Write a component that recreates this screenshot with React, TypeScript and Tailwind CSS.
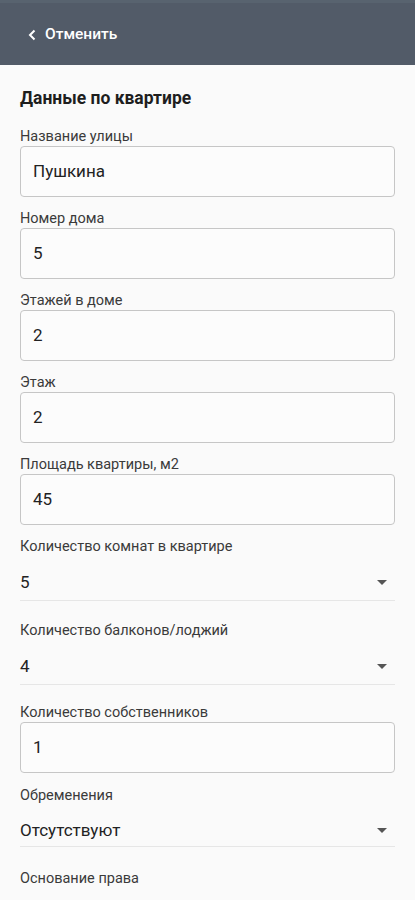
import React from "react";

const font = { fontFamily: "Roboto, 'Noto Sans', sans-serif" };

function Label({ children, cls = "" }: { children: React.ReactNode; cls?: string }) {
  return <div className={`text-[14.5px] leading-[20px] text-[#3a3a3a] ${cls}`}>{children}</div>;
}

function TextField({ label, value }: { label: string; value: string }) {
  return (
    <div className="flex flex-col">
      <Label>{label}</Label>
      <div className="mt-[-1px] flex h-[51px] items-center rounded-[4px] border border-[#c6c6c6] bg-[#fcfcfc] px-[12px] text-[17px] text-[#222]">
        {value}
      </div>
    </div>
  );
}

function SelectField({ label, value, rowCls }: { label: string; value: string; rowCls: string }) {
  return (
    <div className="flex flex-col">
      <Label>{label}</Label>
      <div className={`flex items-center justify-between border-b border-[#e6e6e6] pr-[8px] text-[17px] leading-[20px] text-[#222] ${rowCls}`}>
        <span>{value}</span>
        <svg width="10" height="5" viewBox="0 0 10 5">
          <path d="M0 0 L10 0 L5 5 Z" fill="#555" />
        </svg>
      </div>
    </div>
  );
}

export default function App() {
  return (
    <div className="min-h-[900px] w-[415px] bg-[#fafafa]" style={font}>
      <div className="flex h-[65px] items-center border-t-[3px] border-[#58636f] bg-[#525b68] pl-[28px] pt-[1px]">
        <svg width="9" height="12" viewBox="0 0 9 12" className="mr-[8px]">
          <path d="M6.5 1.5 L2 6 L6.5 10.5" fill="none" stroke="#fff" strokeWidth="2" />
        </svg>
        <span className="text-[15.5px] font-medium text-white">Отменить</span>
      </div>
      <div className="flex flex-col px-[20px] pt-[21px]">
        <div className="text-[17.5px] font-bold leading-[24px] text-[#1e1e1e]">Данные по квартире</div>
        <div className="mt-[17px] flex flex-col gap-[12px]">
          <TextField label="Название улицы" value="Пушкина" />
          <TextField label="Номер дома" value="5" />
          <TextField label="Этажей в доме" value="2" />
          <TextField label="Этаж" value="2" />
          <TextField label="Площадь квартиры, м2" value="45" />
        </div>
        <div className="mt-[12px] flex flex-col">
          <SelectField label="Количество комнат в квартире" value="5" rowCls="pt-[15px] pb-[8px]" />
          <div className="mt-[20px]">
            <SelectField label="Количество балконов/лоджий" value="4" rowCls="pt-[15px] pb-[8px]" />
          </div>
          <div className="mt-[18px]">
            <TextField label="Количество собственников" value="1" />
          </div>
          <div className="mt-[13px]">
            <SelectField label="Обременения" value="Отсутствуют" rowCls="pt-[14px] pb-[6px]" />
          </div>
          <div className="mt-[22px]">
            <Label>Основание права</Label>
          </div>
        </div>
      </div>
    </div>
  );
}
